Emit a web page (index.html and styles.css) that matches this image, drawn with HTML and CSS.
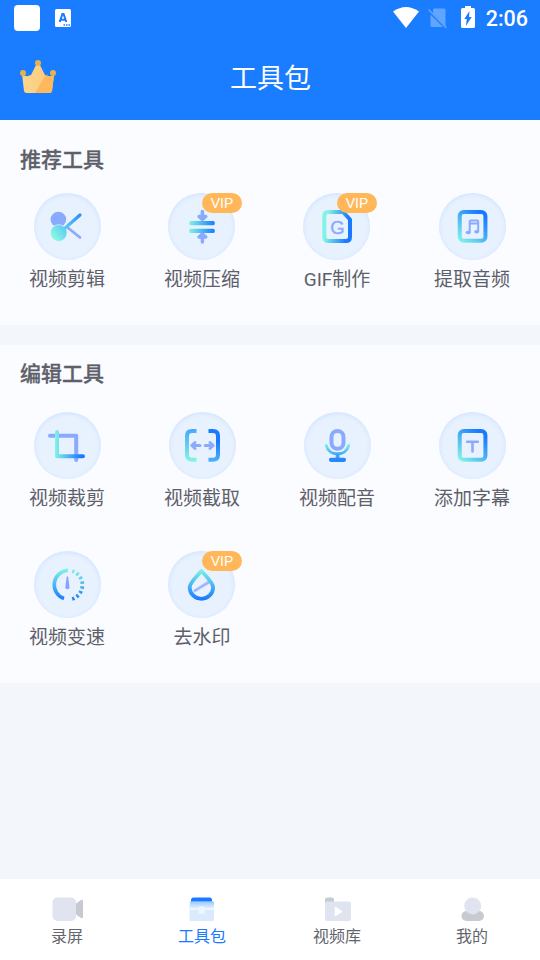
FILE: index.html
```html
<!DOCTYPE html>
<html lang="zh-CN">
<head>
<meta charset="utf-8">
<title>工具包</title>
<link rel="stylesheet" href="styles.css">
</head>
<body>
<svg class="defs" width="0" height="0" aria-hidden="true">
  <defs>
    <linearGradient id="h" gradientUnits="userSpaceOnUse" x1="21" y1="0" x2="47" y2="0"><stop offset="0" stop-color="#82f3e5"/><stop offset="1" stop-color="#1a7aff"/></linearGradient>
    <linearGradient id="doc" gradientUnits="userSpaceOnUse" x1="19" y1="30" x2="49" y2="34"><stop offset=".15" stop-color="#82f3e5"/><stop offset=".85" stop-color="#1a7aff"/></linearGradient>
    <linearGradient id="box" gradientUnits="userSpaceOnUse" x1="20" y1="48" x2="45" y2="19"><stop offset="0" stop-color="#86f6e4"/><stop offset=".9" stop-color="#1a7aff"/></linearGradient>
    <linearGradient id="v" gradientUnits="userSpaceOnUse" x1="0" y1="18" x2="0" y2="49"><stop offset="0" stop-color="#82f3e5"/><stop offset="1" stop-color="#1a7aff"/></linearGradient>
    <linearGradient id="mic" gradientUnits="userSpaceOnUse" x1="0" y1="32" x2="0" y2="49"><stop offset="0" stop-color="#82f3e5"/><stop offset="1" stop-color="#1a7aff"/></linearGradient>
    <linearGradient id="cut" gradientUnits="userSpaceOnUse" x1="0" y1="50" x2="0" y2="17"><stop offset="0" stop-color="#86f6e4"/><stop offset="1" stop-color="#45a9f8"/></linearGradient>
    <linearGradient id="cut2" gradientUnits="userSpaceOnUse" x1="0" y1="50" x2="0" y2="17"><stop offset="0" stop-color="#4db4f6"/><stop offset=".6" stop-color="#1a7aff"/></linearGradient>
    <linearGradient id="blade" gradientUnits="userSpaceOnUse" x1="20" y1="44" x2="47" y2="22"><stop offset="0" stop-color="#86f6e4"/><stop offset="1" stop-color="#2e8cff"/></linearGradient>
    <linearGradient id="gold" x1="0" y1="0" x2="1" y2="0"><stop offset="0" stop-color="#fcd68f"/><stop offset="1" stop-color="#fbc878"/></linearGradient>
    <linearGradient id="lid" x1="0" y1="0" x2="0" y2="1"><stop offset="0" stop-color="#9bc8fd"/><stop offset="1" stop-color="#e2effe"/></linearGradient>
  </defs>
</svg>

<header class="appbar">
  <div class="status">
    <div class="status-left">
      <span class="blank"></span>
      <svg width="16" height="18" viewBox="0 0 16 18"><rect width="16" height="18" rx="1.5" fill="#fff"/><path d="M4.700 13 7.400 5h1.200l2.700 8M5.800 10.800h4.400" fill="none" stroke="#1a7aff" stroke-width="2"/><path d="M8.500 16h1.500m1 0h1.500m1 0H15" stroke="#1a7aff" stroke-width="1.300"/></svg>
    </div>
    <div class="status-right">
      <svg class="wifi" width="26" height="21" viewBox="0 0 26 21"><path d="M0 4.500Q13-4.500 26 4.500L13 21Z" fill="#fff"/></svg>
      <svg class="sim" width="19" height="21" viewBox="0 0 19 21"><path d="M6 .5h10q1.500 0 1.500 1.500v16.500L5 5.500V2ZM2.500 6.500v11q0 1.500 1.500 1.500h11Z" fill="#60a5ff"/><path d="m.5 1.500 18 18.500" stroke="#60a5ff" stroke-width="1.500"/></svg>
      <svg class="battery" width="14" height="22" viewBox="0 0 14 22"><path d="M4 0h6v2h2.500Q14 2 14 3.500V20.500Q14 22 12.500 22h-11Q0 22 0 20.500V3.500Q0 2 1.500 2H4Z" fill="#fff"/><path d="M8.500 5 3.300 13h2.500l-1 7L10.700 11H8Z" fill="#1a7aff"/></svg>
      <span class="time">2:06</span>
    </div>
  </div>
  <div class="titlebar">
    <svg class="crown" width="36" height="34" viewBox="0 0 36 34"><path d="M8 14q2 2.500 5 1l-2 8Zm20 0q-2 2.500-5 1l2 8Z" fill="#cf9c51"/><path d="M2 14q5 4 9 1L16 5h4l5 10q4 3 9 0l-2 16q-.5 2-2.500 2h-23q-2 0-2.500-2Z" fill="url(#gold)"/><path d="M25.500 15q4.500 2.500 8.500 0l-2 16q-.5 2-2.500 2H15Z" fill="#ffb95d"/><circle cx="18" cy="3" r="3" fill="#e4b34f"/><circle cx="3" cy="13" r="3" fill="#e4b34f"/><circle cx="33" cy="13" r="3" fill="#e4b34f"/></svg>
    <h1>工具包</h1>
  </div>
</header>

<main>
  <section class="panel recommended">
    <h2>推荐工具</h2>
    <div class="grid">
      <div class="tool">
        <div class="disc"><svg viewBox="0 0 67 67"><path d="M33.500 34.500 46 44.500" stroke="#8aaaff" stroke-width="2.800" stroke-linecap="round"/><circle cx="24.400" cy="26.500" r="7.800" fill="#8aaaff"/><circle cx="24.700" cy="40" r="8.800" fill="#e8f2ff"/><circle cx="24.700" cy="40" r="8" fill="url(#blade)"/><path d="M30 36 46 22" stroke="url(#blade)" stroke-width="3.200" stroke-linecap="round"/></svg></div>
        <span>视频剪辑</span>
      </div>
      <div class="tool">
        <div class="disc has-vip"><svg viewBox="0 0 67 67"><rect x="21.300" y="28" width="25.400" height="4.300" rx="1.500" fill="url(#h)"/><rect x="21.300" y="35.700" width="25.400" height="4.300" rx="1.500" fill="url(#h)"/><path d="M34.400 18.500V25M31 23.500l3.400 2.800 3.400-2.800ZM34.400 49v-6M31 44l3.400-2.800 3.400 2.800Z" fill="#8aaaff" stroke="#8aaaff" stroke-width="3.500" stroke-linecap="round" stroke-linejoin="round"/></svg><b class="vip">VIP</b></div>
        <span>视频压缩</span>
      </div>
      <div class="tool">
        <div class="disc has-vip"><svg viewBox="0 0 67 67"><path d="M25.300 19H40l7 7.500V44q0 4-4 4H25.300q-4 0-4-4V23q0-4 4-4Z" fill="none" stroke="url(#doc)" stroke-width="4" stroke-linejoin="round"/><text class="letter" x="34.400" y="41.300" text-anchor="middle">G</text></svg><b class="vip">VIP</b></div>
        <span>GIF制作</span>
      </div>
      <div class="tool">
        <div class="disc"><svg viewBox="0 0 67 67"><rect x="20.700" y="19" width="25.700" height="28.800" rx="4" fill="none" stroke="url(#box)" stroke-width="4"/><path d="M30.700 39.500V28.300q0-.7 1-.7h6.500q1 0 1 .7V38.500M31 30.500h8" fill="none" stroke="#8aaaff" stroke-width="2"/><ellipse cx="29.200" cy="39.500" rx="2.600" ry="1.800" fill="#8aaaff"/><ellipse cx="37.700" cy="38.700" rx="2.600" ry="1.800" fill="#8aaaff"/></svg></div>
        <span>提取音频</span>
      </div>
    </div>
  </section>

  <section class="panel editing">
    <h2>编辑工具</h2>
    <div class="grid">
      <div class="tool">
        <div class="disc"><svg viewBox="0 0 67 67"><g fill="none" stroke-width="4" stroke-linecap="round" stroke-linejoin="round"><path d="M16 23.700h26.200V48" stroke="#8aaaff"/><path d="M23 20v24.300h26" stroke="url(#h)"/></g></svg></div>
        <span>视频裁剪</span>
      </div>
      <div class="tool">
        <div class="disc"><svg viewBox="0 0 67 67"><g fill="none" stroke-width="4"><path d="M27.500 19H23q-5 0-5 5v18.700q0 5 5 5h4.500" stroke="url(#cut)"/><path d="M39.500 19H44q5 0 5 5v18.700q0 5-5 5h-4.500" stroke="url(#cut2)"/><path d="M31 33.500h-8M26 30.500l-3.200 3 3.200 3M36.200 33.500h8M41 30.500l3.200 3-3.200 3" stroke="#8aaaff" stroke-width="3" stroke-linecap="round" stroke-linejoin="round"/></g></svg></div>
        <span>视频截取</span>
      </div>
      <div class="tool">
        <div class="disc"><svg viewBox="0 0 67 67"><rect x="27.500" y="19" width="12" height="17.800" rx="6" fill="none" stroke="#8aaaff" stroke-width="4"/><path d="M22.300 33.500C25 44.500 42 44.500 44.700 33.500" fill="none" stroke="url(#mic)" stroke-width="3" stroke-linecap="round"/><path d="M31.700 42h3.800v5h-3.800z" fill="#40a0f8"/><rect x="25" y="45.700" width="17" height="4.200" rx="1.800" fill="#2588ff"/></svg></div>
        <span>视频配音</span>
      </div>
      <div class="tool">
        <div class="disc"><svg viewBox="0 0 67 67"><rect x="20.700" y="19" width="25.700" height="28.800" rx="4" fill="none" stroke="url(#box)" stroke-width="4"/><path d="M28.200 29.800h10.600M33.500 30v9.500" stroke="#8aaaff" stroke-width="2.600" stroke-linecap="round"/></svg></div>
        <span>添加字幕</span>
      </div>
      <div class="tool">
        <div class="disc"><svg viewBox="0 0 67 67"><path d="M34 19.300A14.500 14.500 0 0 0 30 47.500" fill="none" stroke="url(#v)" stroke-width="3.600"/><path d="M38.200 20A14.700 14.700 0 0 1 38.200 48" fill="none" stroke="url(#v)" stroke-width="3.800" stroke-dasharray="2.400 2.540"/><path d="M32.700 25.500h1.400l1.400 11q0 1.700-2.100 1.700t-2.100-1.700Z" fill="#8aa2ff"/></svg></div>
        <span>视频变速</span>
      </div>
      <div class="tool">
        <div class="disc has-vip"><svg viewBox="0 0 67 67"><path d="M25.800 40.300 41 31" stroke="#9fb6ff" stroke-width="2.700"/><path d="M33.400 20C29 25 21.700 31.500 21.700 36.500a11.700 11.300 0 0 0 23.400 0C45.100 31.500 38 25 33.400 20Z" fill="none" stroke="url(#v)" stroke-width="3.800" stroke-linejoin="round"/></svg><b class="vip">VIP</b></div>
        <span>去水印</span>
      </div>
    </div>
  </section>
</main>

<nav class="tabs">
  <div class="tab"><svg width="32" height="26" viewBox="0 0 32 26"><path d="m22 9 7-5q2-1 2 1v16q0 2-2 1l-7-5Z" fill="#c7cad2"/><rect x=".5" y="1.500" width="23.500" height="23.500" rx="5" fill="#dfe4f0"/></svg><span>录屏</span></div>
  <div class="tab active"><svg width="32" height="26" viewBox="1 0 32 26"><path d="M4 5.500h24V12H3.500Z" fill="url(#lid)"/><path d="M3.500 12H28v12q0 1-1 1H4.500q-1 0-1-1Z" fill="#dceafe"/><path d="M3.500 12H28v2H3.500Z" fill="#edf5ff"/><rect x="12.500" y="10.500" width="6.500" height="7.500" rx="2" fill="#eff6ff"/><path d="M5 5.600V4q0-2.500 2.500-2.500h16Q26 1.500 26 4v1.600Z" fill="#1a7aff"/></svg><span>工具包</span></div>
  <div class="tab"><svg width="32" height="26" viewBox="1 0 32 26"><path d="M4 8V4q0-2.500 2.500-2.500h4Q13 1.500 13 4v4Z" fill="#c7cad0"/><rect x="4" y="5.500" width="26" height="19.500" rx="2" fill="#dfe4f0"/><path d="m14.500 11.500 6 4-6 4Z" fill="#fff" stroke="#fff" stroke-width="1.500" stroke-linejoin="round"/></svg><span>视频库</span></div>
  <div class="tab"><svg width="32" height="26" viewBox="1 0 32 26"><rect x="5.500" y="15" width="22.500" height="10" rx="5" fill="#c7cad0"/><circle cx="16.700" cy="10" r="8.500" fill="#dfe4f0"/></svg><span>我的</span></div>
</nav>
</body>
</html>
```
FILE: styles.css
```css
* { box-sizing: border-box; }
body {
  margin: 0;
  height: 960px;
  display: flex;
  flex-direction: column;
  background: #f3f6fb;
  color: #5d606a;
  font-family: Roboto, "Noto Sans CJK SC", sans-serif;
  overflow: hidden;
}
svg { display: block; flex: none; }
.defs { position: absolute; }
h1, h2 { margin: 0; }

.appbar { height: 120px; background: #1a7cff; color: #fff; }
.status { height: 36px; display: flex; justify-content: space-between; align-items: center; padding: 0 12px 0 14px; }
.status-left { display: flex; align-items: center; gap: 15px; }
.blank { width: 26px; height: 26px; border-radius: 4px; background: #fff; }
.status-right { display: flex; align-items: center; }
.wifi { margin-bottom: 2px; }
.sim { margin: 0 14px 0 9px; }
.battery { margin-bottom: 2px; }
.time { margin-left: 11px; font-size: 21.500px; font-weight: 500; line-height: 36px; padding-top: 1px; }
.titlebar { height: 84px; display: grid; grid-template-columns: 36px 1fr 36px; padding: 0 20px; align-items: center; }
.crown { margin-bottom: 2px; }
h1 { font-size: 27px; font-weight: 400; line-height: 40px; text-align: center; padding: 2px 0 0 1px; }

main { flex: 1; }
.panel { background: #fbfcff; }
.recommended { height: 205px; padding-top: 25px; margin-bottom: 20px; }
.editing { height: 338px; padding-top: 14px; }
h2 { font-size: 21px; font-weight: 500; line-height: 30px; padding-left: 20px; -webkit-text-stroke: .3px; }
.grid { display: grid; grid-template-columns: repeat(4, 135px); }
.recommended .grid { margin-top: 18px; }
.editing .grid { margin-top: 23px; row-gap: 37px; }
.tool { height: 102px; display: flex; flex-direction: column; align-items: center; }
.tool span { margin: 5px 1px 0 0; font-size: 19px; line-height: 30px; white-space: nowrap; }
.disc {
  position: relative;
  flex: none;
  width: 67px;
  height: 67px;
  border-radius: 50%;
  background: #e8f2ff;
  box-shadow: inset 0 1px 5px #cde1ff;
}
.disc.has-vip { margin-right: 2px; }
.disc svg { width: 67px; height: 67px; }
.letter { font: 18.500px "Liberation Sans", sans-serif; fill: #8aaaff; stroke: #8aaaff; stroke-width: .4px; }
.vip {
  position: absolute;
  top: 0;
  left: 34px;
  width: 40px;
  height: 19.500px;
  border-radius: 10px;
  background: #ffb75a;
  color: #fff;
  font: 14px/21px "Liberation Sans", sans-serif;
  text-align: center;
}

.tabs { height: 81px; display: grid; grid-template-columns: repeat(4, 1fr); background: #fff; color: #63666d; }
.tab { display: flex; flex-direction: column; align-items: center; padding-top: 17px; }
.tab span { font-size: 16px; line-height: 24px; margin: 3px 1px 0 0; }
.active { color: #1a7aff; }
```
